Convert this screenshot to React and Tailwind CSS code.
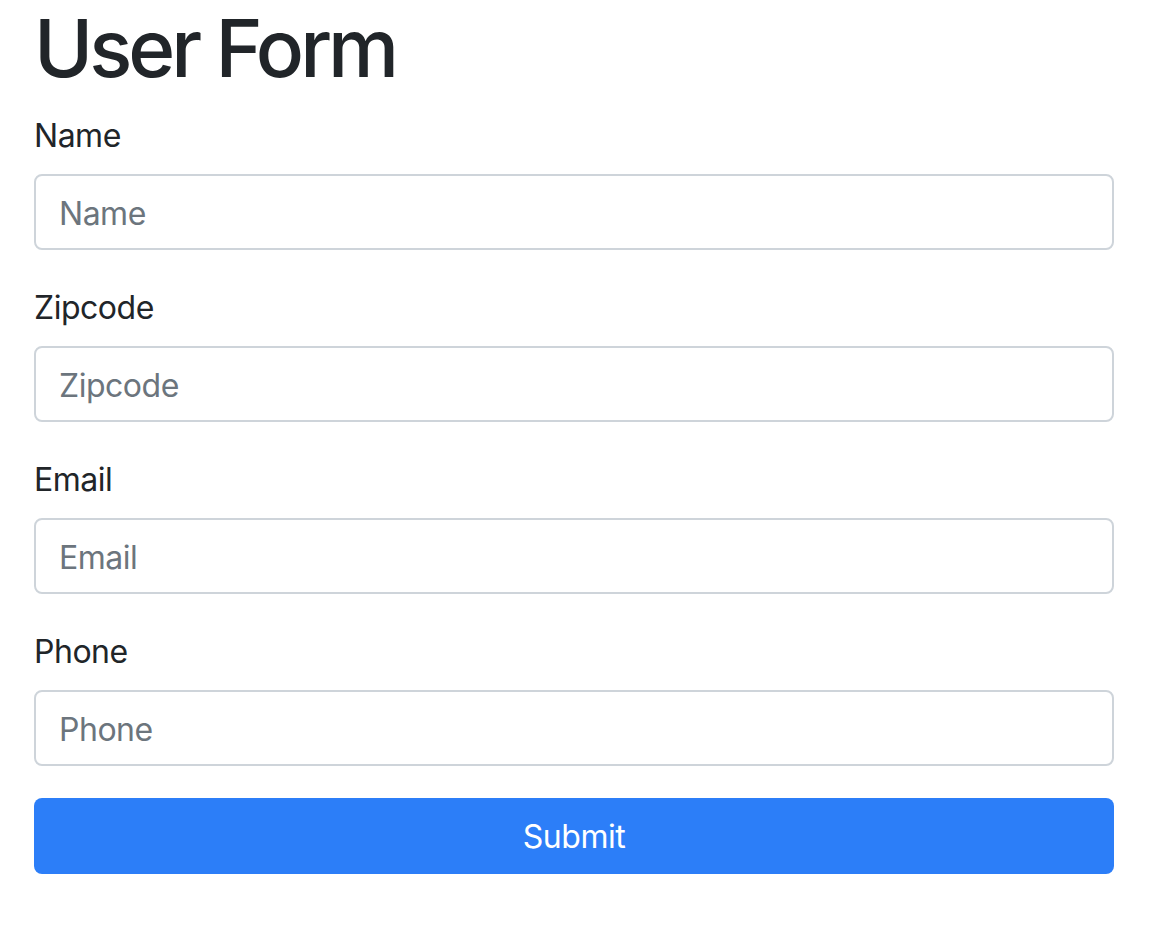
const fields = ['Name', 'Zipcode', 'Email', 'Phone']

export default function App() {
  return (
    <div className="min-h-[930px] bg-white px-[34px] font-['Inter',sans-serif] tracking-[-0.03em] text-[#212529]">
      <form className="w-[1080px]" onSubmit={(e) => e.preventDefault()}>
        <h1 className="mb-[14px] text-[80px] font-medium leading-[96px] tracking-[-0.05em]">User Form</h1>
        {fields.map((f) => (
          <div key={f} className="mb-8">
            <label className="mb-[14px] block pt-[2px] text-[32px] leading-[48px]">{f}</label>
            <input
              className="block h-[76px] w-full rounded-lg border-2 border-[#ced4da] px-[23px] pt-[2px] text-[32px] text-[#495057] placeholder:text-[#6c757d] outline-none"
              placeholder={f}
            />
          </div>
        ))}
        <button
          type="submit"
          className="block h-[76px] w-full rounded-lg bg-[#2c7ef8] pt-[2px] text-[32px] text-white"
        >
          Submit
        </button>
      </form>
    </div>
  )
}
